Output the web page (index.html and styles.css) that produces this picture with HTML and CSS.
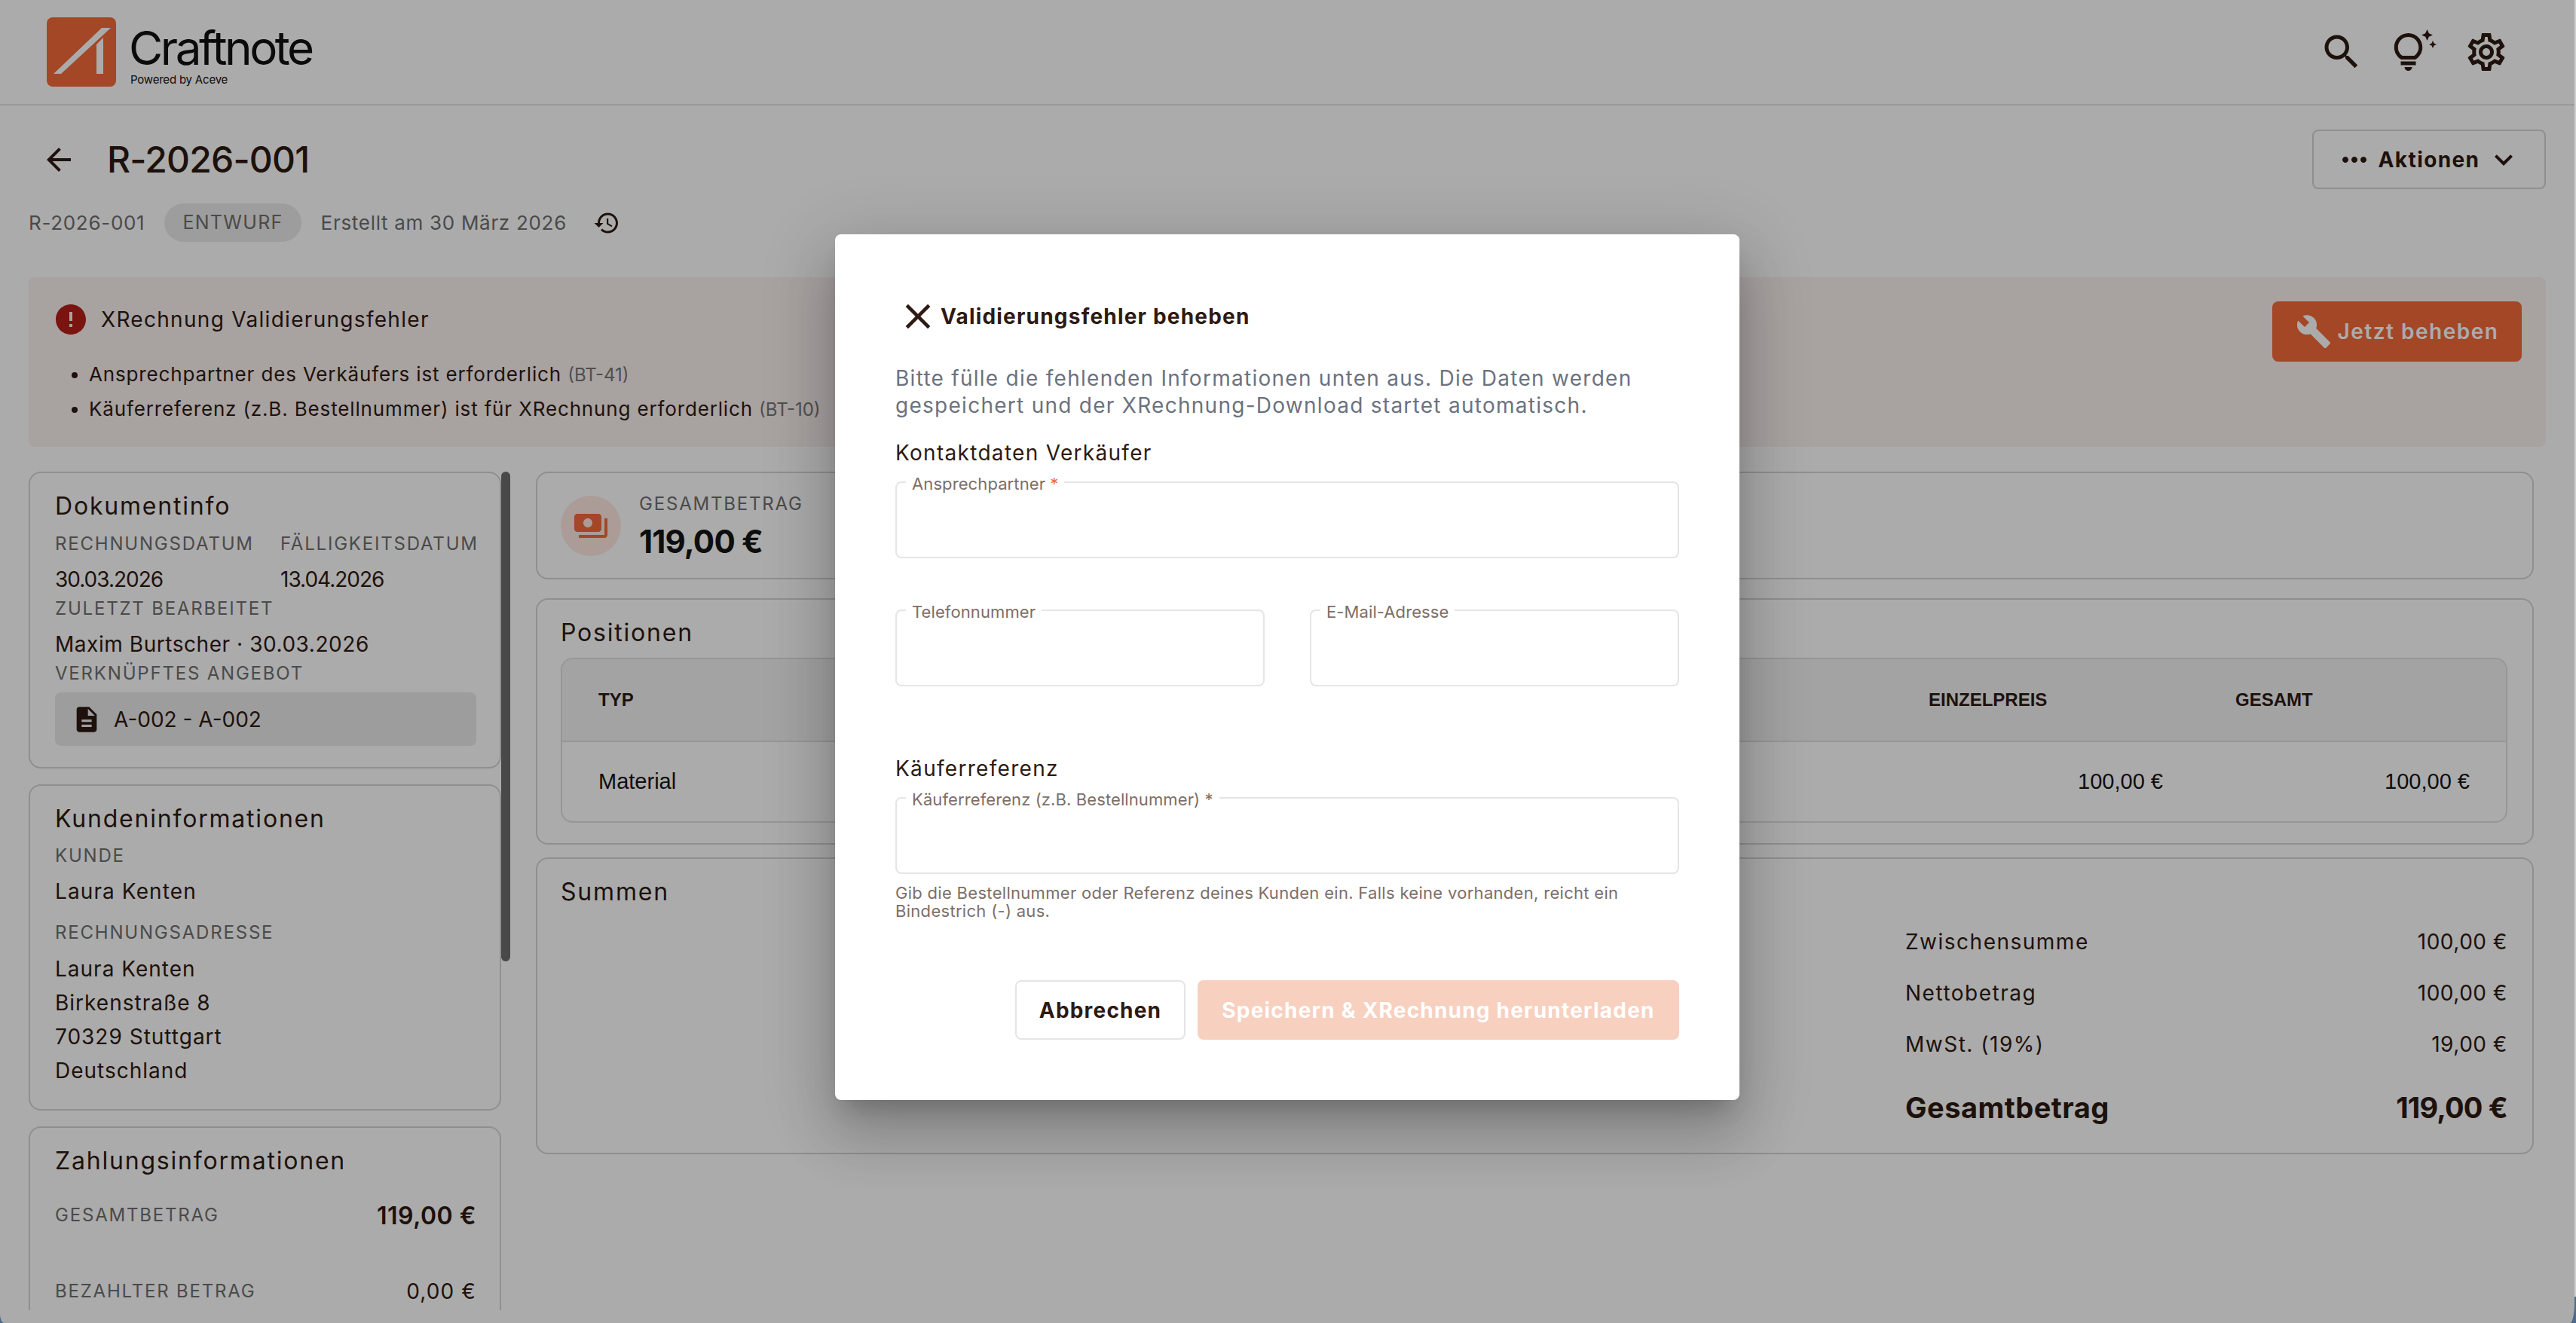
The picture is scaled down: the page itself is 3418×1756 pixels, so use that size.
FILE: index.html
```html
<!DOCTYPE html>
<html lang="de">
<head>
  <meta charset="UTF-8" />
  <meta name="viewport" content="width=device-width, initial-scale=1.0" />
  <title>Craftnote - R-2026-001</title>
  <link rel="stylesheet" href="styles.css">
</head>
<body>
  <div class="app">
    <header class="topbar">
      <div class="logo">
        <svg class="logo-mark" viewBox="0 0 92 92">
          <rect width="92" height="92" rx="8" fill="#f36a3a" />
          <polygon points="85,14 73,14 9,75 19,75" fill="#fff" />
          <polygon points="75,27 75,75 66,75 66,36" fill="#fff" />
        </svg>
        <div class="logo-text">
          <div class="logo-name">Craftnote</div>
          <div class="logo-sub">Powered by Aceve</div>
        </div>
      </div>
      <div class="topbar-icons">
        <svg class="icon-60" viewBox="0 0 24 24"><path d="M15.5 14h-.79l-.28-.27C15.41 12.59 16 11.11 16 9.5 16 5.91 13.09 3 9.5 3S3 5.91 3 9.5 5.91 16 9.5 16c1.61 0 3.09-.59 4.23-1.57l.27.28v.79l5 4.99L20.49 19l-4.99-5zm-6 0C7.01 14 5 11.99 5 9.5S7.01 5 9.5 5 14 7.01 14 9.5 11.99 14 9.5 14z" /></svg>
        <svg class="icon-60" viewBox="0 0 24 24"><path d="M7 20h4c0 1.1-.9 2-2 2s-2-.9-2-2zm-2-1h8v-2H5v2zm11.5-9.5c0 3.82-2.66 5.86-3.77 6.5H5.27c-1.11-.64-3.77-2.68-3.77-6.5C1.5 5.36 4.86 2 9 2s7.5 3.36 7.5 7.5zm-2 0C14.5 6.47 12.03 4 9 4S3.5 6.47 3.5 9.5c0 2.47 1.49 3.89 2.35 4.5h6.3c.86-.61 2.35-2.03 2.35-4.5zm6.87-2.13L20 8l1.37.63L22 10l.63-1.37L24 8l-1.37-.63L22 6l-.63 1.37zM19 6l.94-2.06L22 3l-2.06-.94L19 0l-.94 2.06L16 3l2.06.94L19 6z" /></svg>
        <svg class="icon-60" viewBox="0 0 24 24"><path d="M19.43 12.98c.04-.32.07-.64.07-.98 0-.34-.03-.66-.07-.98l2.11-1.65c.19-.15.24-.42.12-.64l-2-3.46c-.09-.16-.26-.25-.44-.25-.06 0-.12.01-.17.03l-2.49 1c-.52-.4-1.08-.73-1.69-.98l-.38-2.65C14.46 2.18 14.25 2 14 2h-4c-.25 0-.46.18-.49.42l-.38 2.65c-.61.25-1.17.59-1.69.98l-2.49-1c-.06-.02-.12-.03-.18-.03-.17 0-.34.09-.43.25l-2 3.46c-.13.22-.07.49.12.64l2.11 1.65c-.04.32-.07.65-.07.98 0 .33.03.66.07.98l-2.11 1.65c-.19.15-.24.42-.12.64l2 3.46c.09.16.26.25.44.25.06 0 .12-.01.17-.03l2.49-1c.52.4 1.08.73 1.69.98l.38 2.65c.03.24.24.42.49.42h4c.25 0 .46-.18.49-.42l.38-2.65c.61-.25 1.17-.59 1.69-.98l2.49 1c.06.02.12.03.18.03.17 0 .34-.09.43-.25l2-3.46c.12-.22.07-.49-.12-.64l-2.11-1.65zm-1.98-1.71c.04.31.05.52.05.73 0 .21-.02.43-.05.73l-.14 1.13.89.7 1.08.84-.7 1.21-1.27-.51-1.04-.42-.9.68c-.43.32-.84.56-1.25.73l-1.06.43-.16 1.13-.2 1.35h-1.4l-.19-1.35-.16-1.13-1.06-.43c-.43-.18-.83-.41-1.23-.71l-.91-.7-1.06.43-1.27.51-.7-1.21 1.08-.84.89-.7-.14-1.13c-.03-.31-.05-.54-.05-.74s.02-.43.05-.73l.14-1.13-.89-.7-1.08-.84.7-1.21 1.27.51 1.04.42.9-.68c.43-.32.84-.56 1.25-.73l1.06-.43.16-1.13.2-1.35h1.39l.19 1.35.16 1.13 1.06.43c.43.18.83.41 1.23.71l.91.7 1.06-.43 1.27-.51.7 1.21-1.07.85-.89.7.14 1.13zM12 8c-2.21 0-4 1.79-4 4s1.79 4 4 4 4-1.79 4-4-1.79-4-4-4zm0 6c-1.1 0-2-.9-2-2s.9-2 2-2 2 .9 2 2-.9 2-2 2z" /></svg>
      </div>
    </header>

    <main class="page">
      <div class="page-head">
        <div class="page-title">
          <svg class="icon-48" viewBox="0 0 24 24"><path d="M20 11H7.83l5.59-5.59L12 4l-8 8 8 8 1.41-1.41L7.83 13H20v-2z" /></svg>
          <h1>R-2026-001</h1>
        </div>
        <div class="actions-btn">
          <svg class="icon-48" viewBox="0 0 24 24"><path d="M6 10c-1.1 0-2 .9-2 2s.9 2 2 2 2-.9 2-2-.9-2-2-2zm12 0c-1.1 0-2 .9-2 2s.9 2 2 2 2-.9 2-2-.9-2-2-2zm-6 0c-1.1 0-2 .9-2 2s.9 2 2 2 2-.9 2-2-.9-2-2-2z" /></svg>
          <span>Aktionen</span>
          <svg class="icon-48" viewBox="0 0 24 24"><path d="M16.59 8.59L12 13.17 7.41 8.59 6 10l6 6 6-6z" /></svg>
        </div>
      </div>

      <div class="sub-row">
        <span>R-2026-001</span>
        <span class="chip">ENTWURF</span>
        <span>Erstellt am 30 März 2026</span>
        <svg class="icon-36" viewBox="0 0 24 24"><path d="M13 3c-4.97 0-9 4.03-9 9H1l3.89 3.89.07.14L9 12H6c0-3.87 3.13-7 7-7s7 3.13 7 7-3.13 7-7 7c-1.93 0-3.68-.79-4.94-2.06l-1.42 1.42C8.27 19.99 10.51 21 13 21c4.97 0 9-4.03 9-9s-4.03-9-9-9zm-1 5v5l4.28 2.54.72-1.21-3.5-2.08V8H12z" /></svg>
      </div>

      <section class="alert">
        <div class="alert-body">
          <div class="alert-title">
            <svg class="icon-48 icon-error" viewBox="0 0 24 24"><path d="M12 2C6.48 2 2 6.48 2 12s4.48 10 10 10 10-4.48 10-10S17.52 2 12 2zm1 15h-2v-2h2v2zm0-4h-2V7h2v6z" /></svg>
            <span>XRechnung Validierungsfehler</span>
          </div>
          <ul>
            <li>Ansprechpartner des Verkäufers ist erforderlich <span class="bt">(BT-41)</span></li>
            <li>Käuferreferenz (z.B. Bestellnummer) ist für XRechnung erforderlich <span class="bt">(BT-10)</span></li>
          </ul>
        </div>
        <div class="fix-btn">
          <svg class="icon-48" viewBox="0 0 24 24"><path d="M22.7 19l-9.1-9.1c.9-2.3.4-5-1.5-6.9-2-2-5-2.4-7.4-1.3L9 6 6 9 1.6 4.7C.4 7.1.9 10.1 2.9 12.1c1.9 1.9 4.6 2.4 6.9 1.5l9.1 9.1c.4.4 1 .4 1.4 0l2.3-2.3c.5-.4.5-1.1.1-1.4z" /></svg>
          <span>Jetzt beheben</span>
        </div>
      </section>

      <div class="columns">
        <aside class="side">
          <div class="scroll-thumb"></div>
          <section class="card">
            <h2>Dokumentinfo</h2>
            <div class="date-grid">
              <div>
                <div class="info-label">RECHNUNGSDATUM</div>
                <div class="info-value date">30.03.2026</div>
              </div>
              <div>
                <div class="info-label">FÄLLIGKEITSDATUM</div>
                <div class="info-value date">13.04.2026</div>
              </div>
            </div>
            <div class="info-label">ZULETZT BEARBEITET</div>
            <div class="info-value mixed">Maxim Burtscher · 30.03.2026</div>
            <div class="info-label">VERKNÜPFTES ANGEBOT</div>
            <div class="linked-doc">
              <svg class="icon-40" viewBox="0 0 24 24"><path d="M14 2H6c-1.1 0-1.99.9-1.99 2L4 20c0 1.1.89 2 1.99 2H18c1.1 0 2-.9 2-2V8l-6-6zm2 16H8v-2h8v2zm0-4H8v-2h8v2zm-3-5V3.5L18.5 9H13z" /></svg>
              <span>A-002 - A-002</span>
            </div>
          </section>

          <section class="card">
            <h2>Kundeninformationen</h2>
            <div class="info-label tight">KUNDE</div>
            <div class="info-value">Laura Kenten</div>
            <div class="info-label spaced">RECHNUNGSADRESSE</div>
            <div class="address">
              <div>Laura Kenten</div>
              <div>Birkenstraße 8</div>
              <div>70329 Stuttgart</div>
              <div>Deutschland</div>
            </div>
          </section>

          <section class="card">
            <h2>Zahlungsinformationen</h2>
            <div class="pay-row first">
              <span class="info-label">GESAMTBETRAG</span>
              <span class="pay-total">119,00 €</span>
            </div>
            <div class="pay-row">
              <span class="info-label">BEZAHLTER BETRAG</span>
              <span class="info-value">0,00 €</span>
            </div>
          </section>
        </aside>

        <div class="content">
          <section class="card total-card">
            <div class="total-icon">
              <svg class="icon-48" viewBox="0 0 24 24"><path d="M19 14V6c0-1.1-.9-2-2-2H3c-1.1 0-2 .9-2 2v8c0 1.1.9 2 2 2h14c1.1 0 2-.9 2-2zm-9-1c-1.66 0-3-1.34-3-3s1.34-3 3-3 3 1.34 3 3-1.34 3-3 3zm13-6v11c0 1.1-.9 2-2 2H4v-2h17V7h2z" /></svg>
            </div>
            <div>
              <div class="info-label">GESAMTBETRAG</div>
              <div class="total-value">119,00 €</div>
            </div>
          </section>

          <section class="card positions-card">
            <h2>Positionen</h2>
            <div class="items">
              <div class="items-row items-head">
                <div>TYP</div>
                <div>EINZELPREIS</div>
                <div>GESAMT</div>
              </div>
              <div class="items-row items-body">
                <div>Material</div>
                <div>100,00 €</div>
                <div>100,00 €</div>
              </div>
            </div>
          </section>

          <section class="card sums-card">
            <h2>Summen</h2>
            <div class="sums">
              <div class="sum-row"><span>Zwischensumme</span><span class="sum-amount">100,00 €</span></div>
              <div class="sum-row"><span>Nettobetrag</span><span class="sum-amount">100,00 €</span></div>
              <div class="sum-row"><span>MwSt. (19%)</span><span class="sum-amount">19,00 €</span></div>
              <div class="sum-row sum-total"><span>Gesamtbetrag</span><span class="sum-amount">119,00 €</span></div>
            </div>
          </section>
        </div>
      </div>
    </main>

    <div class="overlay">
      <div class="modal">
        <div class="modal-title">
          <svg class="icon-56" viewBox="0 0 24 24"><path d="M19 6.41 17.59 5 12 10.59 6.41 5 5 6.41 10.59 12 5 17.59 6.41 19 12 13.41 17.59 19 19 17.59 13.41 12z" /></svg>
          <span>Validierungsfehler beheben</span>
        </div>
        <p class="modal-text">Bitte fülle die fehlenden Informationen unten aus. Die Daten werden gespeichert und der XRechnung-Download startet automatisch.</p>

        <h3 class="form-head">Kontaktdaten Verkäufer</h3>
        <div class="field">
          <label>Ansprechpartner <em>*</em></label>
        </div>
        <div class="field-row">
          <div class="field"><label>Telefonnummer</label></div>
          <div class="field"><label>E-Mail-Adresse</label></div>
        </div>

        <h3 class="form-head second">Käuferreferenz</h3>
        <div class="field">
          <label>Käuferreferenz (z.B. Bestellnummer) *</label>
        </div>
        <p class="helper">Gib die Bestellnummer oder Referenz deines Kunden ein. Falls keine vorhanden, reicht ein Bindestrich (-) aus.</p>

        <div class="modal-actions">
          <div class="btn-cancel">Abbrechen</div>
          <div class="btn-save">Speichern &amp; XRechnung herunterladen</div>
        </div>
      </div>
    </div>
  </div>
</body>
</html>
```

FILE: styles.css
```css
* {
  box-sizing: border-box;
}

body {
  margin: 0;
  height: 100vh;
  overflow: hidden;
  background: linear-gradient(to bottom, #cfcfcf 0 98%, #4d6c8e 98%);
  font-family: Inter, 'Open Sans', sans-serif;
  color: #2e1a12;
}

svg {
  fill: currentColor;
  flex-shrink: 0;
  display: block;
}

.icon-36 { width: 36px; height: 36px; }
.icon-40 { width: 40px; height: 40px; }
.icon-48 { width: 48px; height: 48px; }
.icon-56 { width: 56px; height: 56px; }
.icon-60 { width: 60px; height: 60px; }

.app {
  position: relative;
  height: 100vh;
  margin-right: 2px;
  background: #fff;
  overflow: hidden;
  border-radius: 0 0 6px 6px / 0 0 30px 13px;
  display: flex;
  flex-direction: column;
}

/* top bar */
.topbar {
  flex: 0 0 140px;
  display: flex;
  justify-content: space-between;
  align-items: center;
  padding: 0 87px 0 62px;
  border-bottom: 2px solid #e4e4e4;
}

.logo {
  display: flex;
  align-items: flex-start;
  gap: 17px;
}

.logo-mark {
  width: 92px;
  height: 92px;
}

.logo-text {
  color: #111;
  padding-top: 8px;
}

.logo-name {
  font-size: 62px;
  line-height: 66px;
  letter-spacing: -3.5px;
}

.logo-sub {
  font-size: 15px;
  line-height: 18px;
  letter-spacing: -0.2px;
  margin-left: 2px;
}

.topbar-icons {
  display: flex;
  gap: 36px;
}

/* page head */
.page {
  flex: 1;
  min-height: 0;
  padding: 32px 38px 17px;
  display: flex;
  flex-direction: column;
}

.page-head {
  display: flex;
  justify-content: space-between;
  align-items: center;
}

.page-title {
  display: flex;
  align-items: center;
  gap: 40px;
  padding-left: 16px;
}

h1 {
  margin: 0;
  font-size: 48px;
  font-weight: 500;
  letter-spacing: -0.8px;
}

.actions-btn {
  width: 310px;
  height: 79px;
  border: 2px solid #d6d6d6;
  border-radius: 8px;
  display: flex;
  align-items: center;
  justify-content: center;
  font-size: 28px;
  font-weight: 700;
  letter-spacing: 1.4px;
}

.actions-btn span {
  margin: 0 8px;
}

.sub-row {
  display: flex;
  align-items: center;
  margin-top: 19px;
  height: 51px;
  gap: 26px;
  font-size: 26px;
  color: #6f6f6f;
  letter-spacing: 0.7px;
}

.sub-row svg {
  color: #2e1a12;
  margin-left: 9px;
}

.chip {
  background: #ebebeb;
  border-radius: 26px;
  height: 51px;
  line-height: 51px;
  padding: 0 24px;
  font-weight: 400;
  font-size: 25px;
  letter-spacing: 1.3px;
}

/* alert */
.alert {
  flex: 0 0 225px;
  margin-top: 47px;
  padding: 32px 32px 0;
  border-radius: 8px;
  background: #fbf2f0;
  display: flex;
  justify-content: space-between;
  align-items: flex-start;
}

.alert-title {
  display: flex;
  align-items: center;
  gap: 16px;
  font-size: 28px;
  letter-spacing: 1.3px;
}

.icon-error {
  color: #b71f1a;
}

.alert ul {
  margin: 26px 0 0;
  padding: 0 0 0 48px;
  font-size: 26px;
  line-height: 45px;
  letter-spacing: 0.85px;
}

.bt {
  font-size: 24px;
  color: #777;
  letter-spacing: 0;
}

.fix-btn {
  width: 331px;
  height: 80px;
  background: #f36a3a;
  border-radius: 8px;
  color: #fff;
  display: flex;
  align-items: center;
  justify-content: center;
  gap: 8px;
  font-size: 28px;
  font-weight: 600;
  letter-spacing: 1.5px;
}

/* columns */
.columns {
  flex: 1;
  min-height: 0;
  margin-top: 33px;
  padding-right: 16px;
  display: grid;
  grid-template-columns: 627px 1fr;
  gap: 46px;
  overflow: hidden;
}

.side {
  position: relative;
  display: flex;
  flex-direction: column;
  gap: 21px;
}

.scroll-thumb {
  position: absolute;
  top: 0;
  right: -12px;
  width: 12px;
  height: 650px;
  border-radius: 6px;
  background: #6e6e6e;
}

.card {
  border: 2px solid #d6d6d6;
  border-radius: 16px;
  padding: 21px 31px 28px 33px;
}

h2 {
  margin: 0;
  font-size: 32px;
  line-height: 46px;
  font-weight: 400;
  letter-spacing: 1.8px;
}

.date-grid {
  display: grid;
  grid-template-columns: 299px 1fr;
  margin-top: 10px;
}

.info-label {
  font-size: 24px;
  line-height: 34px;
  color: #6f6f6f;
  letter-spacing: 1.8px;
}

.info-value {
  font-size: 28px;
  line-height: 43px;
  margin-top: 9px;
  letter-spacing: 1.1px;
}

.info-value.date {
  letter-spacing: -1px;
}

.info-value.mixed {
  letter-spacing: 0.55px;
}

.info-label.tight {
  margin-top: 9px;
}

.info-label.spaced {
  margin-top: 16px;
}

.linked-doc {
  margin-top: 8px;
  height: 71px;
  padding-left: 22px;
  background: #ebebeb;
  border-radius: 8px;
  display: flex;
  align-items: center;
  gap: 16px;
  font-size: 28px;
}

.address {
  margin-top: 9px;
  font-size: 28px;
  line-height: 45px;
  letter-spacing: 1px;
}

.pay-row {
  display: flex;
  justify-content: space-between;
  align-items: center;
  height: 44px;
  margin-top: 57px;
}

.pay-row.first {
  margin-top: 27px;
}

.pay-row .info-value {
  margin: 0;
}

.pay-total {
  font-size: 32px;
  font-weight: 600;
  letter-spacing: 0.5px;
}

/* right side */
.content {
  display: flex;
  flex-direction: column;
}

.content .card {
  padding-left: 31px;
  padding-right: 33px;
}

.content .card.total-card {
  height: 143px;
  display: flex;
  align-items: center;
  gap: 24px;
  padding: 0 31px;
}

.total-icon {
  width: 80px;
  height: 80px;
  border-radius: 50%;
  background: #ffe9e2;
  color: #f36a3a;
  display: flex;
  align-items: center;
  justify-content: center;
}

.total-value {
  margin-top: 8px;
  font-size: 42px;
  line-height: 50px;
  font-weight: 700;
  letter-spacing: -0.8px;
  color: #141414;
}

.positions-card {
  margin-top: 25px;
  height: 327px;
}

.items {
  margin-top: 10px;
  border: 2px solid #e0e0e0;
  border-radius: 16px;
  overflow: hidden;
  font-family: 'Liberation Sans', Arial, sans-serif;
}

.items-row {
  display: grid;
  grid-template-columns: 1fr 407px 407px;
  align-items: center;
}

.items-row div {
  padding: 0 48px;
}

.items-head {
  height: 110px;
  background: #f3f3f3;
  border-bottom: 2px solid #e0e0e0;
  font-size: 24px;
  font-weight: 700;
}

.items-body {
  height: 105px;
  font-size: 29px;
  color: #141414;
}

.items-body div + div {
  text-align: right;
}

.sums-card {
  margin-top: 17px;
  height: 394px;
}

.sums {
  width: 799px;
  margin: 0 0 0 auto;
  font-size: 28px;
  letter-spacing: 1.5px;
}

.sum-amount {
  letter-spacing: 0.5px;
}

.sum-row {
  display: flex;
  justify-content: space-between;
  align-items: center;
  height: 44px;
  margin-top: 24px;
}

.sum-row:first-child {
  margin-top: 21px;
}

.sum-total {
  margin-top: 40px;
  font-size: 38px;
  font-weight: 700;
  letter-spacing: 0.5px;
}

.sum-total .sum-amount {
  letter-spacing: -0.8px;
}

/* dialog */
.overlay {
  position: absolute;
  inset: 0;
  background: rgba(0, 0, 0, 0.33);
  display: flex;
  justify-content: center;
  align-items: flex-start;
  padding-top: 311px;
}

.modal {
  width: 1200px;
  height: 1149px;
  padding: 81px 80px 80px;
  background: #fff;
  border-radius: 8px;
  box-shadow: 0 22px 30px -14px rgba(0, 0, 0, 0.2),
              0 48px 76px 6px rgba(0, 0, 0, 0.14),
              0 18px 92px 16px rgba(0, 0, 0, 0.12);
}

.modal-title {
  display: flex;
  align-items: center;
  margin-left: 2px;
  font-size: 28px;
  font-weight: 700;
  letter-spacing: 1.2px;
}

.modal-title svg {
  margin-right: 2px;
}

.modal-text {
  margin: 36px 0 0;
  font-size: 28px;
  line-height: 36px;
  color: #6b7280;
  letter-spacing: 1.27px;
}

.form-head {
  margin: 25px 0 0;
  font-size: 28px;
  line-height: 40px;
  font-weight: 400;
  letter-spacing: 1.3px;
}

.form-head.second {
  margin-top: 89px;
}

.field {
  position: relative;
  height: 102px;
  margin-top: 18px;
  border: 2px solid #e5e5e5;
  border-radius: 8px;
}

.field label {
  position: absolute;
  top: -12px;
  left: 12px;
  padding: 0 8px;
  background: #fff;
  font-size: 22px;
  line-height: 26px;
  color: #7d6e68;
  letter-spacing: 0.1px;
}

.field em {
  font-style: normal;
  color: #f36a3a;
}

.field-row {
  display: grid;
  grid-template-columns: 1fr 1fr;
  gap: 60px;
  margin-top: 68px;
}

.field-row .field {
  margin-top: 0;
}

.helper {
  margin: 13px 0 0;
  font-size: 22px;
  line-height: 24px;
  color: #7d6e68;
  letter-spacing: 0.3px;
}

.modal-actions {
  display: flex;
  justify-content: flex-end;
  gap: 16px;
  margin-top: 80px;
  height: 79px;
  font-size: 28px;
  font-weight: 700;
  letter-spacing: 1.2px;
}

.btn-cancel {
  width: 226px;
  border: 2px solid #e5e5e5;
  border-radius: 8px;
  display: flex;
  align-items: center;
  justify-content: center;
}

.btn-save {
  width: 639px;
  background: #f7d0c0;
  border-radius: 8px;
  color: #fff;
  display: flex;
  align-items: center;
  justify-content: center;
}
```
